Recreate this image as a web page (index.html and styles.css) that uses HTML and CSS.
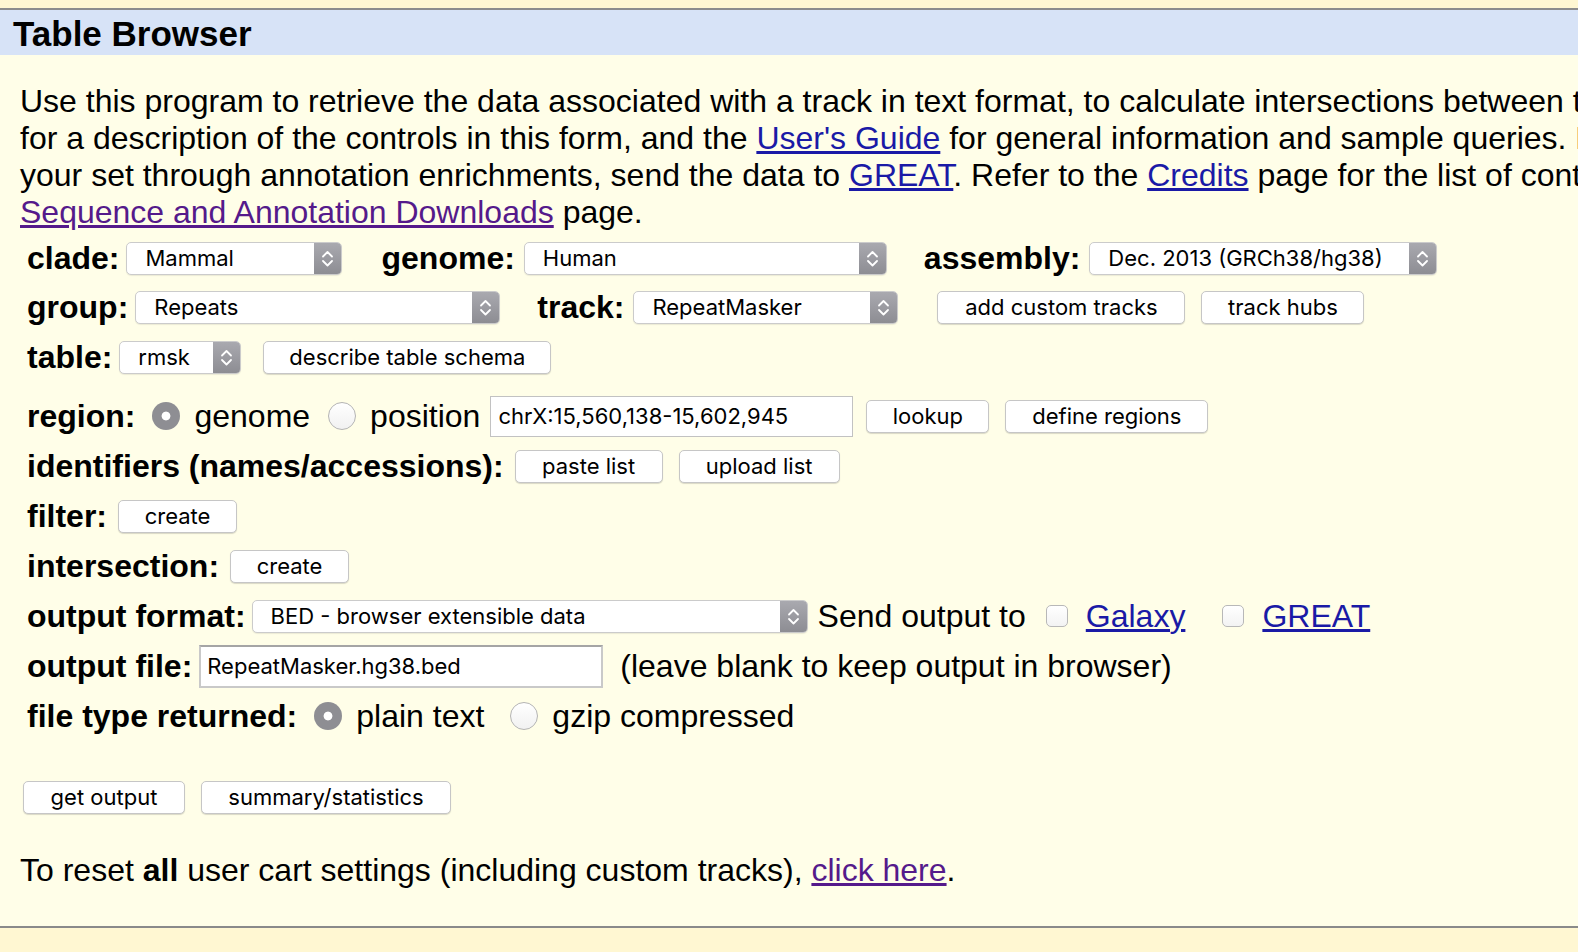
FILE: index.html
```html
<!DOCTYPE html>
<html>
<head>
<meta charset="utf-8">
<title>Table Browser</title>
<link rel="stylesheet" href="styles.css">
</head>
<body>
<div class="page">
  <div class="topbar"></div>
  <div class="header"><h1 class="title">Table Browser</h1></div>
  <div class="main">
    <p class="intro">Use this program to retrieve the data associated with a track in text format, to calculate intersections between tracks, and to retrieve DNA sequence covered by a track. For help in using this application see <a class="lnk" href="#">Using the Table Browser</a><br>for a description of the controls in this form, and the <a class="lnk" href="#">User's Guide</a> for general information and sample queries. For more complex queries, you may want to use <a class="lnk" href="#">Galaxy</a> or our <a class="lnk" href="#">public MySQL server</a>. To examine the biological function of<br>your set through annotation enrichments, send the data to <a class="lnk" href="#">GREAT</a>. Refer to the <a class="lnk" href="#">Credits</a> page for the list of contributors and usage restrictions associated with these data. All tables can be downloaded in their entirety from the<br><a class="lnk visited" href="#">Sequence and Annotation Downloads</a> page.</p>

    <div class="form">
      <div class="row r1">
        <span class="label">clade:</span>
        <span class="select w-clade gap-g"><span class="sel-text">Mammal</span><span class="stepper"><svg width="27" height="31" viewBox="0 0 27 31"><path d="M9 13.5 L13.5 9 L18 13.5 M9 18 L13.5 22.5 L18 18" fill="none" stroke="#fff" stroke-width="1.8" stroke-linecap="round" stroke-linejoin="round"/></svg></span></span>
        <span class="label gap-l1">genome:</span>
        <span class="select w-genome"><span class="sel-text">Human</span><span class="stepper"><svg width="27" height="31" viewBox="0 0 27 31"><path d="M9 13.5 L13.5 9 L18 13.5 M9 18 L13.5 22.5 L18 18" fill="none" stroke="#fff" stroke-width="1.8" stroke-linecap="round" stroke-linejoin="round"/></svg></span></span>
        <span class="label gap-l">assembly:</span>
        <span class="select w-assembly"><span class="sel-text">Dec. 2013 (GRCh38/hg38)</span><span class="stepper"><svg width="27" height="31" viewBox="0 0 27 31"><path d="M9 13.5 L13.5 9 L18 13.5 M9 18 L13.5 22.5 L18 18" fill="none" stroke="#fff" stroke-width="1.8" stroke-linecap="round" stroke-linejoin="round"/></svg></span></span>
      </div>
      <div class="row r2">
        <span class="label">group:</span>
        <span class="select w-group gap-g"><span class="sel-text">Repeats</span><span class="stepper"><svg width="27" height="31" viewBox="0 0 27 31"><path d="M9 13.5 L13.5 9 L18 13.5 M9 18 L13.5 22.5 L18 18" fill="none" stroke="#fff" stroke-width="1.8" stroke-linecap="round" stroke-linejoin="round"/></svg></span></span>
        <span class="label gap-l">track:</span>
        <span class="select w-track"><span class="sel-text">RepeatMasker</span><span class="stepper"><svg width="27" height="31" viewBox="0 0 27 31"><path d="M9 13.5 L13.5 9 L18 13.5 M9 18 L13.5 22.5 L18 18" fill="none" stroke="#fff" stroke-width="1.8" stroke-linecap="round" stroke-linejoin="round"/></svg></span></span>
        <button class="btn w-addct gap-b">add custom tracks</button>
        <button class="btn w-hubs gap-s">track hubs</button>
      </div>
      <div class="row r3">
        <span class="label">table:</span>
        <span class="select w-table gap-g"><span class="sel-text">rmsk</span><span class="stepper"><svg width="27" height="31" viewBox="0 0 27 31"><path d="M9 13.5 L13.5 9 L18 13.5 M9 18 L13.5 22.5 L18 18" fill="none" stroke="#fff" stroke-width="1.8" stroke-linecap="round" stroke-linejoin="round"/></svg></span></span>
        <button class="btn w-describe gap-m">describe table schema</button>
      </div>
      <div class="row r4">
        <span class="label">region:</span>
        <span class="radio checked gap-r"></span>
        <span class="opt">genome</span>
        <span class="radio gap-r2"></span>
        <span class="opt">position</span>
        <span class="textbox w-pos">chrX:15,560,138-15,602,945</span>
        <button class="btn w-lookup gap-t">lookup</button>
        <button class="btn w-define gap-s">define regions</button>
      </div>
      <div class="row">
        <span class="label">identifiers (names/accessions):</span>
        <button class="btn w-paste gap-i">paste list</button>
        <button class="btn w-upload gap-s">upload list</button>
      </div>
      <div class="row">
        <span class="label">filter:</span>
        <button class="btn w-create gap-c">create</button>
      </div>
      <div class="row">
        <span class="label">intersection:</span>
        <button class="btn w-create gap-c">create</button>
      </div>
      <div class="row">
        <span class="label">output format:</span>
        <span class="select w-format gap-of"><span class="sel-text">BED - browser extensible data</span><span class="stepper"><svg width="27" height="31" viewBox="0 0 27 31"><path d="M9 13.5 L13.5 9 L18 13.5 M9 18 L13.5 22.5 L18 18" fill="none" stroke="#fff" stroke-width="1.8" stroke-linecap="round" stroke-linejoin="round"/></svg></span></span>
        <span class="opt gap-send">Send output to</span>
        <span class="checkbox gap-cb1"></span>
        <a class="lnk opt gap-cbl" href="#">Galaxy</a>
        <span class="checkbox gap-cb2"></span>
        <a class="lnk opt gap-cbl" href="#">GREAT</a>
      </div>
      <div class="row">
        <span class="label">output file:</span>
        <span class="textbox file w-file gap-g">RepeatMasker.hg38.bed</span>
        <span class="opt gap-leave">(leave blank to keep output in browser)</span>
      </div>
      <div class="row">
        <span class="label">file type returned:</span>
        <span class="radio checked gap-ft"></span>
        <span class="opt">plain text</span>
        <span class="radio gap-r3"></span>
        <span class="opt">gzip compressed</span>
      </div>
      <div class="row actions">
        <button class="btn w-get">get output</button>
        <button class="btn w-summary gap-s">summary/statistics</button>
      </div>
    </div>

    <p class="reset">To reset <b>all</b> user cart settings (including custom tracks), <a class="lnk visited" href="#">click here</a>.</p>
  </div>
  <div class="footbar"></div>
</div>
</body>
</html>
```

FILE: styles.css
```css
html, body {
  margin: 0;
  padding: 0;
}
body {
  background: #fff8d6;
  font-family: "Liberation Sans", Arial, Helvetica, sans-serif;
  color: #000;
}
.page {
  width: 1578px;
  height: 952px;
  overflow: hidden;
  display: flex;
  flex-direction: column;
}
.topbar {
  height: 8px;
  background: #fff7d2;
  border-bottom: 2px solid #8c8c8c;
  flex: none;
}
.header {
  height: 45px;
  background: #d7e3f7;
  flex: none;
}
.title {
  margin: 0;
  padding: 2px 0 0 13px;
  font-size: 35px;
  line-height: 43px;
  font-weight: bold;
}
.main {
  height: 871px;
  background: #fffee8;
  flex: none;
  overflow: hidden;
}
.footbar {
  flex: 1;
  background: #fff7d2;
  border-top: 2px solid #8a8a8a;
}
.intro {
  margin: 28px 0 0 0;
  padding-left: 20px;
  font-size: 32px;
  line-height: 37px;
  white-space: nowrap;
}
.lnk {
  color: #1a1aa6;
  text-decoration: underline;
}
.lnk.visited {
  color: #551a8b;
}
.form {
  margin-top: 3px;
  padding-left: 27px;
}
.row {
  display: flex;
  align-items: center;
  height: 50px;
  white-space: nowrap;
}
.row.r1 { height: 48px; }
.row.r4 { margin-top: 9px; }
.row.actions {
  margin-top: 31px;
  margin-left: -4px;
}
.label {
  font-weight: bold;
  font-size: 32px;
}
.opt {
  font-size: 32px;
}
.select {
  display: flex;
  align-items: center;
  justify-content: space-between;
  height: 33px;
  box-sizing: border-box;
  background: #fff;
  border: 1px solid #cbcbcb;
  border-radius: 5px;
  box-shadow: 0 1px 1px rgba(0,0,0,0.08);
  margin-left: 9px;
  font-family: Inter, "Noto Sans", sans-serif;
  font-size: 22px;
  overflow: hidden;
}
.sel-text {
  padding-left: 18px;
}
.stepper {
  width: 27px;
  height: 100%;
  background: linear-gradient(#a9a9af, #8d8d93);
  display: flex;
  align-items: center;
  justify-content: center;
  flex: none;
}
.stepper svg {
  display: block;
}
.btn {
  height: 33px;
  box-sizing: border-box;
  background: #fff;
  border: 1px solid #c6c6c6;
  border-radius: 5px;
  box-shadow: 0 1px 1px rgba(0,0,0,0.15);
  font-family: Inter, "Noto Sans", sans-serif;
  font-size: 22px;
  color: #000;
  padding: 0;
  margin-left: 9px;
}
.textbox {
  display: flex;
  align-items: center;
  box-sizing: border-box;
  height: 41px;
  background: #fff;
  border: 1px solid #c2c2c2;
  padding-left: 7px;
  font-family: Inter, "Noto Sans", sans-serif;
  font-size: 22px;
  margin-left: 10px;
}
.textbox.file {
  height: 43px;
  border: 2px solid #c9c9c9;
  border-top-color: #a5a5a5;
  padding-left: 6px;
}
.radio {
  display: inline-block;
  width: 28px;
  height: 28px;
  box-sizing: border-box;
  border-radius: 50%;
  border: 1px solid #b4b4b4;
  background: linear-gradient(#ffffff, #f1f1f1);
  margin-right: 14px;
  flex: none;
}
.radio.checked {
  border: none;
  background: radial-gradient(circle, #ffffff 0 4px, #8e8e93 4.8px);
}
.checkbox {
  display: inline-block;
  width: 22px;
  height: 22px;
  box-sizing: border-box;
  border: 1px solid #b8b8b8;
  border-radius: 5px;
  background: linear-gradient(#ffffff, #f3f3f3);
  flex: none;
}

/* widths */
.w-clade { width: 216px; }
.w-genome { width: 363px; }
.w-assembly { width: 348px; }
.w-group { width: 365px; }
.w-track { width: 265px; }
.w-table { width: 122px; }
.w-format { width: 556px; }
.w-addct { width: 248px; }
.w-hubs { width: 163px; }
.w-describe { width: 288px; }
.w-lookup { width: 123px; }
.w-define { width: 203px; }
.w-paste { width: 148px; }
.w-upload { width: 161px; }
.w-create { width: 119px; }
.w-get { width: 162px; margin-left: 0; }
.w-summary { width: 250px; }
.w-pos { width: 363px; }
.w-file { width: 404px; }

/* gaps */
.gap-l { margin-left: 37px; }
.gap-l1 { margin-left: 39px; }
.gap-g { margin-left: 7px; }
.gap-b { margin-left: 39px; }
.gap-s { margin-left: 16px; }
.gap-m { margin-left: 22px; }
.gap-r { margin-left: 17px; }
.gap-r2 { margin-left: 18px; }
.gap-t { margin-left: 13px; }
.gap-i { margin-left: 11px; }
.gap-c { margin-left: 11px; }
.gap-of { margin-left: 6px; }
.gap-send { margin-left: 10px; }
.gap-cb1 { margin-left: 20px; }
.gap-cbl { margin-left: 18px; }
.gap-cb2 { margin-left: 37px; }
.gap-leave { margin-left: 17px; }
.gap-ft { margin-left: 17px; }
.gap-r3 { margin-left: 26px; }

.reset {
  margin: 30px 0 0 0;
  padding-left: 20px;
  font-size: 32px;
  line-height: 37px;
  white-space: nowrap;
}
```
